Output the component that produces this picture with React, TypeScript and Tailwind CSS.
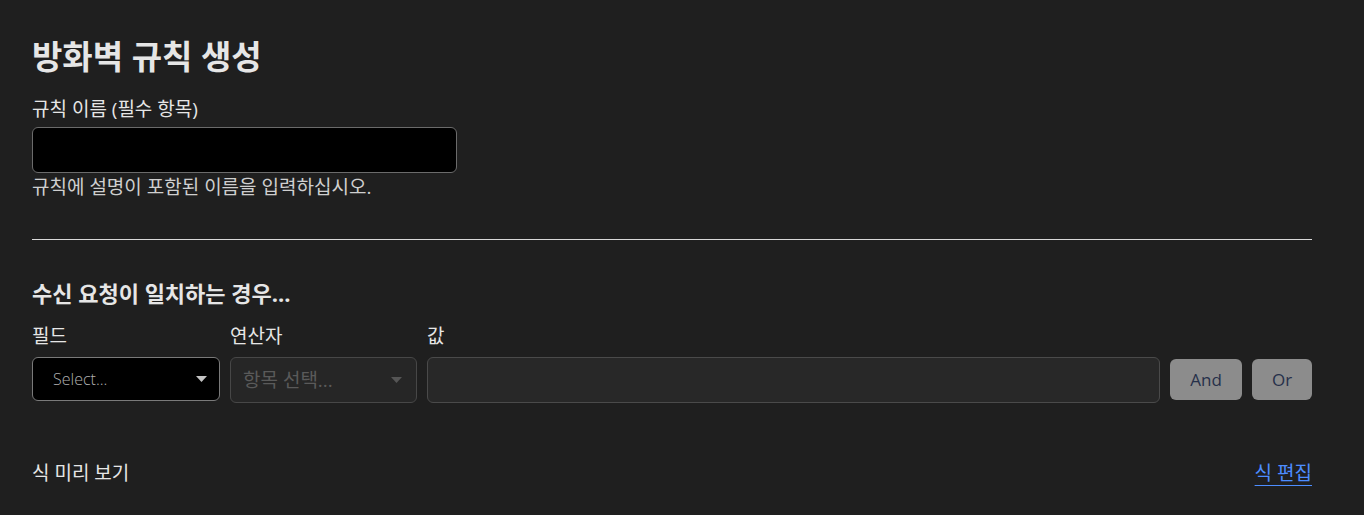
export default function App() {
  return (
    <div
      className="min-h-[515px] bg-[#1f1f1f] pl-8 pt-[34px] text-[#e6e6e6]"
      style={{ fontFamily: '"Open Sans", "Noto Sans CJK KR", sans-serif' }}
    >
      <div className="w-[1280px]">
        {/* Header */}
        <h1 className="text-[33px] font-bold leading-[46px]">방화벽 규칙 생성</h1>

        {/* Rule name */}
        <div className="mt-[16px]">
          <label className="block text-[19px] leading-[26px]">규칙 이름 (필수 항목)</label>
          <input
            type="text"
            className="mt-[5px] block h-[46px] w-[425px] rounded-md border border-[#6b6b6b] bg-black px-3 outline-none"
          />
          <p className="mt-[1px] text-[19px] leading-[26px] text-[#cfcfcf]">규칙에 설명이 포함된 이름을 입력하십시오.</p>
        </div>

        <hr className="mt-[39px] border-t border-[#d9d9d9]" />

        {/* Conditions */}
        <div className="mt-[39px]">
          <h2 className="text-[22px] font-bold leading-[28px]">수신 요청이 일치하는 경우...</h2>
          <div className="mt-[16px] flex items-start gap-[10px]">
            <div className="w-[188px]">
              <div className="text-[19px] leading-[26px]">필드</div>
              <div className="mt-[8px] flex h-[44px] items-center justify-between rounded-md border border-[#7a7a7a] bg-black pl-[20px] pr-[12px]">
                <span className="text-[16px] font-light text-[#b0b0b0]">Select...</span>
                <svg width="11" height="6" viewBox="0 0 11 6"><path d="M0 0h11L5.5 6z" fill="#c4c4c4" /></svg>
              </div>
            </div>
            <div className="w-[187px]">
              <div className="text-[19px] leading-[26px]">연산자</div>
              <div className="mt-[8px] flex h-[46px] items-center justify-between rounded-md border border-[#474747] bg-[#262626] pl-[12px] pr-[14px]">
                <span className="text-[19px] text-[#5a5a5a]">항목 선택...</span>
                <svg width="11" height="6" viewBox="0 0 11 6"><path d="M0 0h11L5.5 6z" fill="#555555" /></svg>
              </div>
            </div>
            <div className="flex-1">
              <div className="text-[19px] leading-[26px]">값</div>
              <div className="mt-[8px] h-[46px] rounded-md border border-[#4a4a4a] bg-[#282828]" />
            </div>
            <div className="mt-[36px] flex gap-[10px]">
              <button className="h-[41px] w-[72px] rounded-md bg-[#8c8c8c] text-[17px] text-[#26304a]">And</button>
              <button className="h-[41px] w-[60px] rounded-md bg-[#8c8c8c] text-[17px] text-[#26304a]">Or</button>
            </div>
          </div>
        </div>

        {/* Preview */}
        <div className="mt-[57px] flex items-center justify-between">
          <span className="text-[19px] leading-[26px]">식 미리 보기</span>
          <a href="#" className="text-[19px] leading-[26px] text-[#4d8dff] underline underline-offset-[5px]">식 편집</a>
        </div>
      </div>
    </div>
  )
}
